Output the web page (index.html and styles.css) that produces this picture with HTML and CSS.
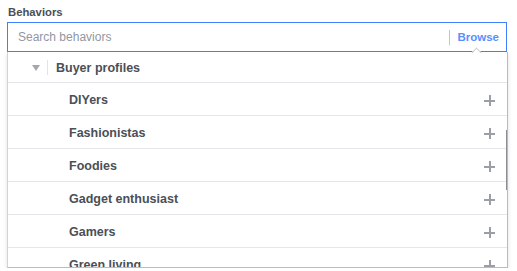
FILE: index.html
```html
<!DOCTYPE html>
<html lang="en">
<head>
    <meta charset="UTF-8">
    <title>Behaviors</title>
    <link rel="stylesheet" href="styles.css">
</head>
<body>
    <div class="field">
        <label class="field-label" for="behavior-search">Behaviors</label>
        <div class="search-box">
            <input type="text" id="behavior-search" placeholder="Search behaviors">
            <span class="divider"></span>
            <a class="browse" href="#">Browse</a>
            <span class="pointer"></span>
        </div>

        <div class="dropdown">
            <ul class="tree">
                <li class="group-row">
                    <span class="arrow"></span>
                    <span class="group-sep"></span>
                    <span class="group-name">Buyer profiles</span>
                </li>
                <li class="item"><span>DIYers</span><span class="plus"></span></li>
                <li class="item"><span>Fashionistas</span><span class="plus"></span></li>
                <li class="item"><span>Foodies</span><span class="plus"></span></li>
                <li class="item"><span>Gadget enthusiast</span><span class="plus"></span></li>
                <li class="item"><span>Gamers</span><span class="plus"></span></li>
                <li class="item"><span>Green living</span><span class="plus"></span></li>
            </ul>
            <span class="scroll-thumb"></span>
        </div>
    </div>
</body>
</html>
```

FILE: styles.css
```css
* {
    box-sizing: border-box;
}

body, ul, li, input {
    margin: 0;
    padding: 0;
}

body {
    font-family: "Liberation Sans", Arial, sans-serif;
    font-size: 12px;
    color: #4b4f56;
    background: #fff;
    padding: 4px 0 0 7px;
}

.field {
    width: 501px;
}

.field-label {
    display: block;
    font-weight: bold;
    font-size: 11.3px;
    line-height: 16px;
    margin: 0 0 2px 1px;
}

.search-box {
    position: relative;
    display: flex;
    align-items: center;
    width: 500px;
    height: 30px;
    border: 1px solid #4080ff;
    background: #fff;
}

.search-box input {
    flex: 1;
    border: none;
    outline: none;
    height: 28px;
    padding-left: 10px;
    font-family: inherit;
    font-size: 12px;
    color: #4b4f56;
}

.search-box input::placeholder {
    color: #9197a3;
}

.divider {
    width: 1px;
    height: 15px;
    background: #bec6d6;
    margin-right: 7px;
}

.browse {
    color: #5890ff;
    font-weight: bold;
    font-size: 11.5px;
    text-decoration: none;
    margin-right: 7px;
}

.pointer {
    position: absolute;
    right: 26px;
    bottom: -5px;
    width: 7px;
    height: 7px;
    background: #fff;
    border-left: 1px solid #ccd0d5;
    border-top: 1px solid #ccd0d5;
    transform: rotate(45deg);
    z-index: 2;
}

.dropdown {
    position: relative;
    width: 501px;
    height: 216px;
    overflow: hidden;
    border-right: 1px solid #b8bcc2;
    border-bottom: 1px solid #b9bcc1;
    border-left: 1px solid #d0d3d8;
    box-shadow: 0 2px 4px rgba(0, 0, 0, 0.12);
}

.tree {
    list-style: none;
}

.group-row {
    display: flex;
    align-items: center;
    height: 31px;
    padding-top: 1px;
    border-bottom: 1px solid #e5e6e9;
}

.arrow {
    width: 0;
    height: 0;
    margin-left: 24px;
    border-left: 4px solid transparent;
    border-right: 4px solid transparent;
    border-top: 6px solid #a4a8ae;
}

.group-sep {
    width: 1px;
    height: 15px;
    background: #e1e3e6;
    margin: 0 8px 0 7px;
}

.group-name {
    font-weight: bold;
    font-size: 12.5px;
}

.item {
    display: flex;
    align-items: center;
    justify-content: space-between;
    height: 33px;
    padding: 2px 12px 0 61px;
    border-bottom: 1px solid #e5e6e9;
    font-weight: bold;
    font-size: 12.5px;
}

.plus {
    position: relative;
    width: 11px;
    height: 11px;
}

.plus::before,
.plus::after {
    content: "";
    position: absolute;
    background: #9a9ea6;
}

.plus::before {
    left: 0;
    top: 5px;
    width: 11px;
    height: 2px;
}

.plus::after {
    left: 5px;
    top: 0;
    width: 2px;
    height: 11px;
}

.scroll-thumb {
    position: absolute;
    right: -1px;
    top: 78px;
    width: 2px;
    height: 60px;
    background: #8a8d91;
}
```
